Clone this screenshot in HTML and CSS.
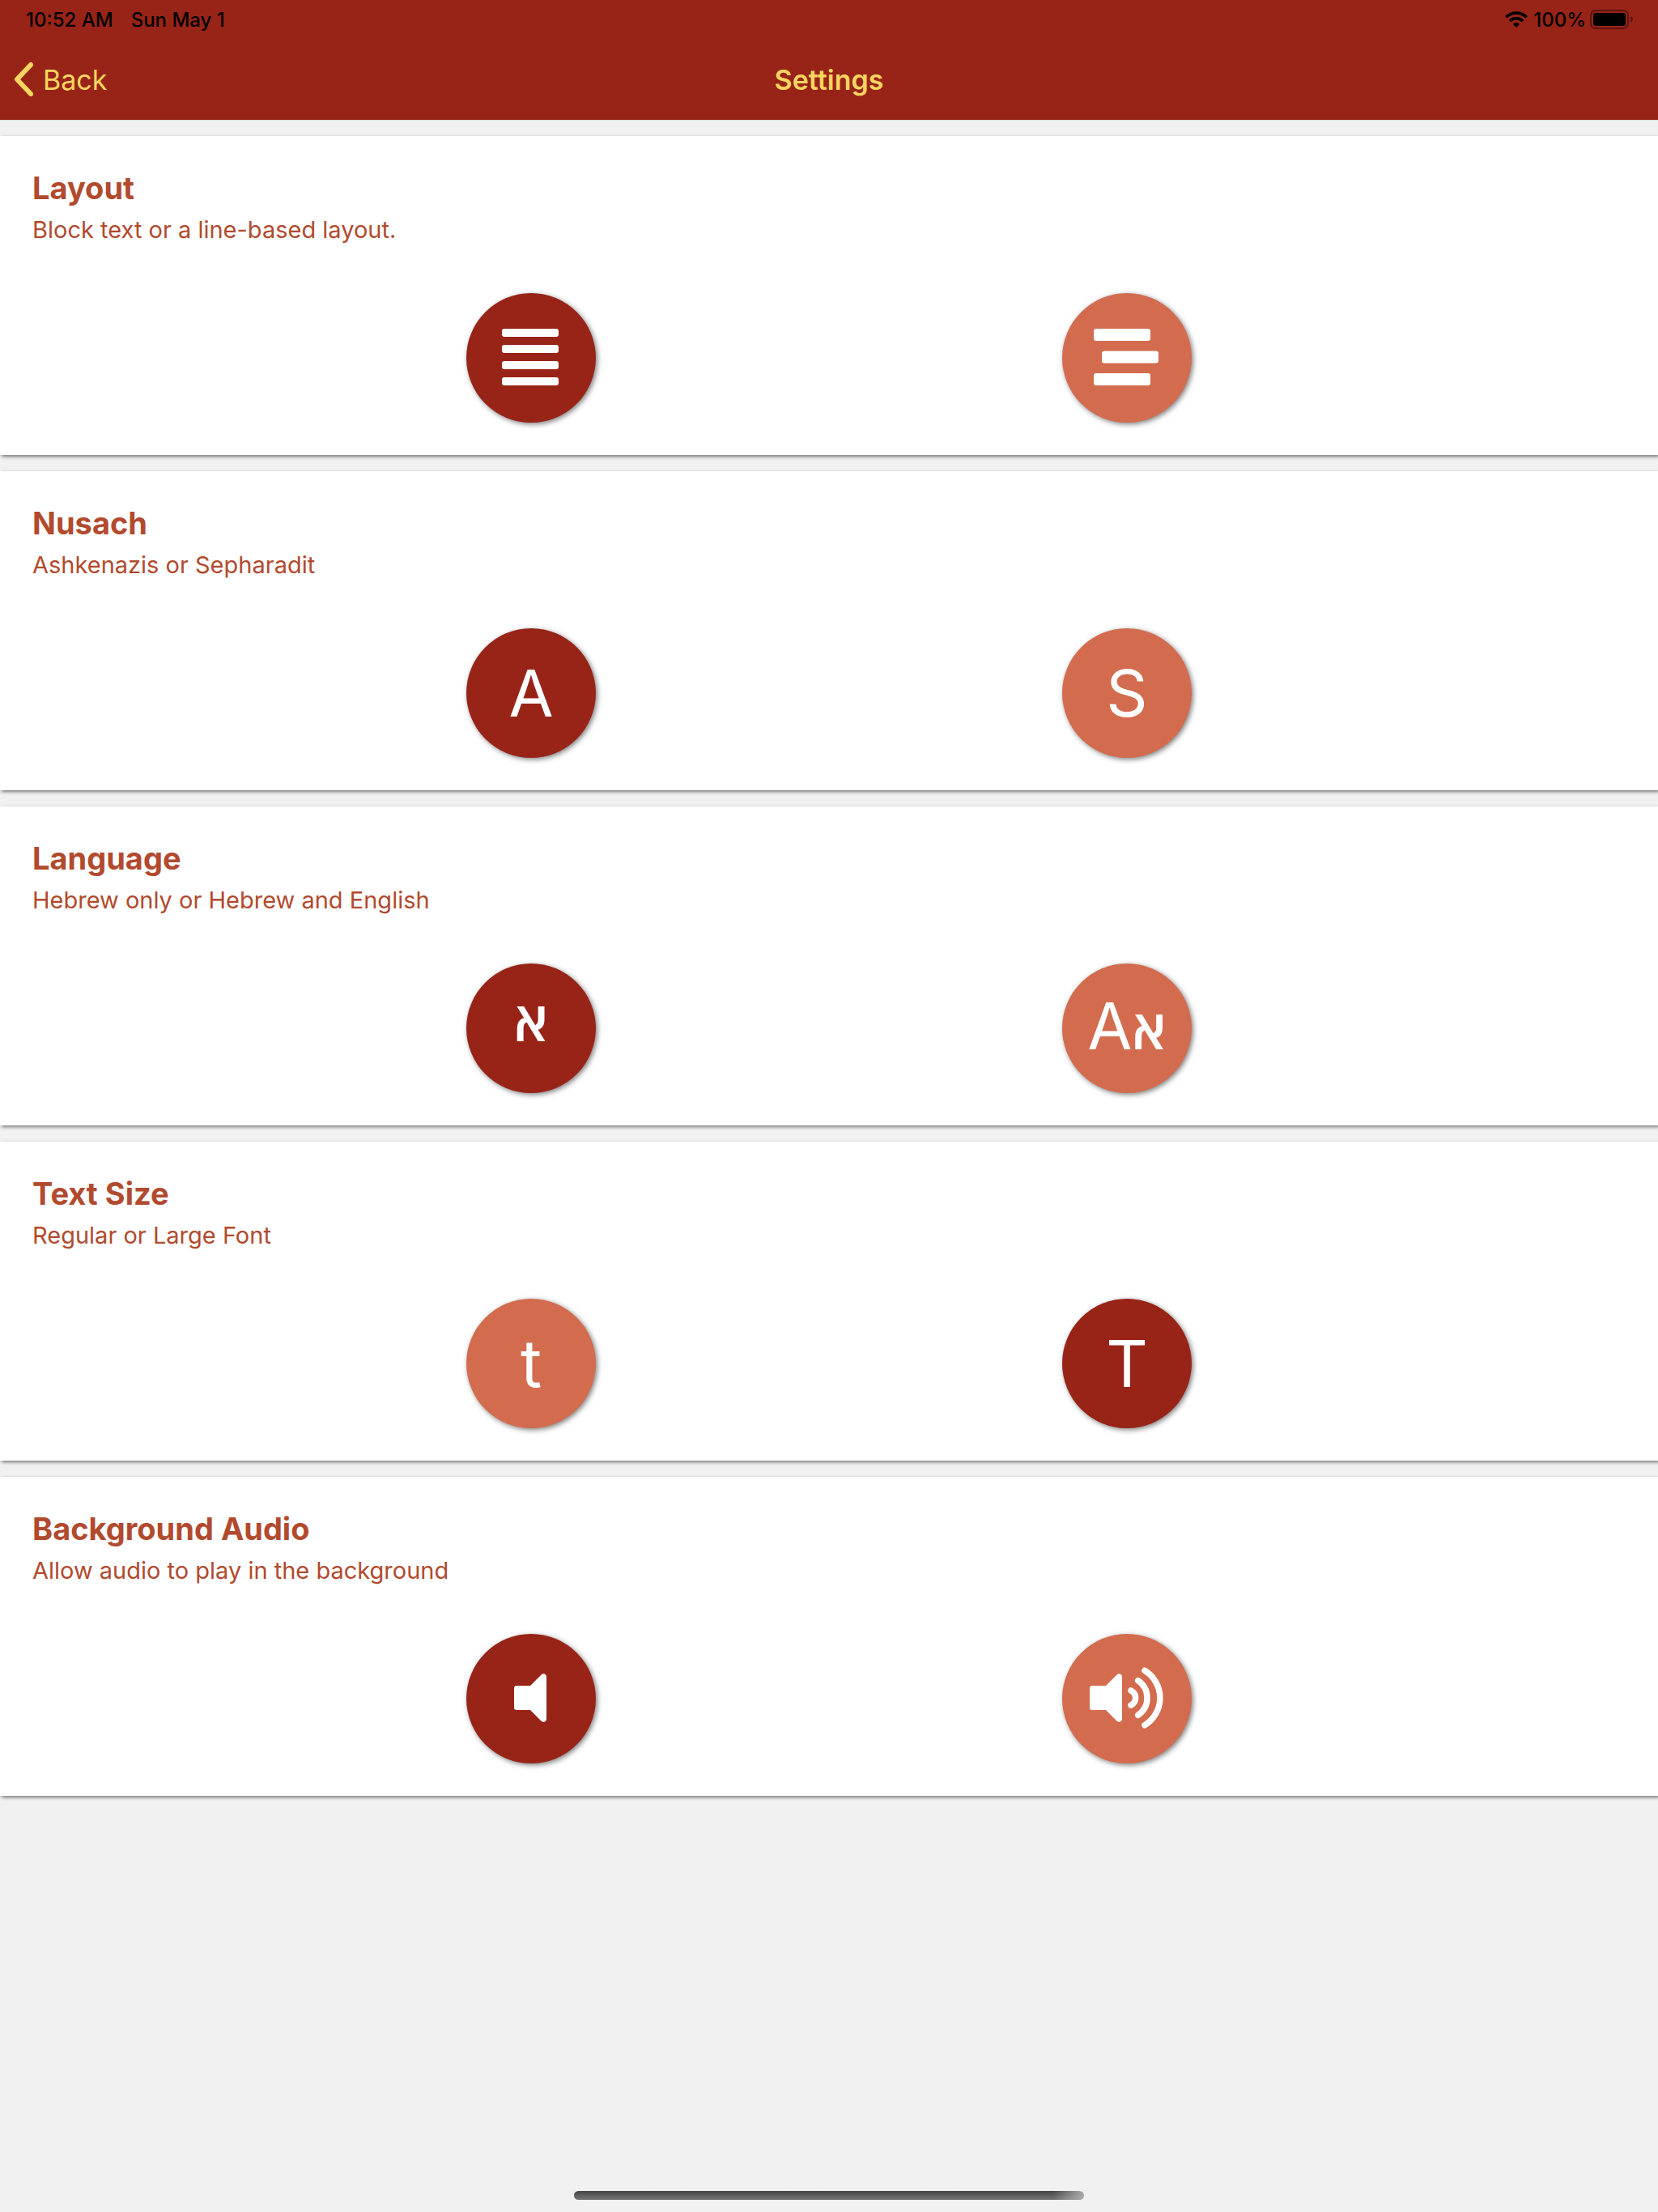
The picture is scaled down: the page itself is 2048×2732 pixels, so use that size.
FILE: index.html
```html
<!DOCTYPE html>
<html lang="en">
<head>
<meta charset="utf-8">
<meta name="viewport" content="width=device-width, initial-scale=1">
<title>Settings</title>
<link rel="stylesheet" href="styles.css">
</head>
<body>
<header class="header">
  <div class="status">
    <div class="status-group status-time"><span>10:52 AM</span><span>Sun May 1</span></div>
    <div class="status-group">
      <svg class="wifi" viewBox="0 0 28 20" aria-hidden="true">
        <g fill="none" stroke="#000" stroke-width="3.6">
          <path d="M1.3 7.2a18 18 0 0 1 25.4 0"/>
          <path d="M5.9 12a11.500 11.500 0 0 1 16.200 0"/>
        </g>
        <path d="M14 20l-4.200-4.200a6 6 0 0 1 8.400 0z"/>
      </svg>
      <span>100%</span>
      <svg class="battery" viewBox="0 0 54 24" aria-hidden="true">
        <rect x="1" y="1" width="46" height="22" rx="6" fill="none" stroke="#5c150f" stroke-width="2"/>
        <rect x="4" y="4" width="40" height="16" rx="3"/>
        <path d="M50 8q3 1.500 3 4t-3 4z" fill="#5c150f"/>
      </svg>
    </div>
  </div>
  <nav class="navbar">
    <button class="back" type="button">
      <svg class="chevron" viewBox="0 0 24 42" aria-hidden="true"><path d="M21 3L4 21l17 18" fill="none" stroke="currentColor" stroke-width="6" stroke-linecap="round" stroke-linejoin="round"/></svg>
      <span>Back</span>
    </button>
    <h1 class="title">Settings</h1>
  </nav>
</header>

<main class="settings">
  <section class="card" role="radiogroup" aria-labelledby="layout-title">
    <h2 class="card-title" id="layout-title">Layout</h2>
    <p class="card-text">Block text or a line-based layout.</p>
    <div class="options">
      <label class="option">
        <input class="choice" type="radio" name="layout" aria-label="Block text" checked>
        <svg class="glyph" viewBox="0 0 160 160" fill="#fff"><rect x="44" y="44" width="70" height="10" rx="3"/><rect x="44" y="64" width="70" height="10" rx="3"/><rect x="44" y="84" width="70" height="10" rx="3"/><rect x="44" y="104" width="70" height="10" rx="3"/></svg>
      </label>
      <label class="option">
        <input class="choice" type="radio" name="layout" aria-label="Line-based">
        <svg class="glyph" viewBox="0 0 160 160" fill="#fff"><rect x="39" y="44" width="70" height="15" rx="3"/><rect x="49" y="71.500" width="70" height="15" rx="3"/><rect x="39" y="99" width="70" height="15" rx="3"/></svg>
      </label>
    </div>
  </section>

  <section class="card" role="radiogroup" aria-labelledby="nusach-title">
    <h2 class="card-title" id="nusach-title">Nusach</h2>
    <p class="card-text">Ashkenazis or Sepharadit</p>
    <div class="options">
      <label class="option">
        <input class="choice" type="radio" name="nusach" checked>
        <span class="glyph">A</span>
      </label>
      <label class="option">
        <input class="choice" type="radio" name="nusach">
        <span class="glyph">S</span>
      </label>
    </div>
  </section>

  <section class="card" role="radiogroup" aria-labelledby="language-title">
    <h2 class="card-title" id="language-title">Language</h2>
    <p class="card-text">Hebrew only or Hebrew and English</p>
    <div class="options">
      <label class="option">
        <input class="choice" type="radio" name="language" checked>
        <span class="glyph glyph-raised"><span class="hebrew" lang="he">א</span></span>
      </label>
      <label class="option">
        <input class="choice" type="radio" name="language">
        <span class="glyph glyph-pair">A<span class="hebrew" lang="he">א</span></span>
      </label>
    </div>
  </section>

  <section class="card" role="radiogroup" aria-labelledby="size-title">
    <h2 class="card-title" id="size-title">Text Size</h2>
    <p class="card-text">Regular or Large Font</p>
    <div class="options">
      <label class="option">
        <input class="choice" type="radio" name="size">
        <span class="glyph">t</span>
      </label>
      <label class="option">
        <input class="choice" type="radio" name="size" checked>
        <span class="glyph">T</span>
      </label>
    </div>
  </section>

  <section class="card" role="radiogroup" aria-labelledby="audio-title">
    <h2 class="card-title" id="audio-title">Background Audio</h2>
    <p class="card-text">Allow audio to play in the background</p>
    <div class="options">
      <label class="option">
        <input class="choice" type="radio" name="audio" aria-label="Off" checked>
        <svg class="glyph" viewBox="0 0 160 160" fill="#fff"><path d="M62 64h17l13.500-13.500c2.500-2.500 6.500-1 6.500 2.500v52c0 3.500-4 5-6.500 2.500L79 94H62q-3 0-3-3V67q0-3 3-3z"/></svg>
      </label>
      <label class="option">
        <input class="choice" type="radio" name="audio" aria-label="On">
        <svg class="glyph" viewBox="0 0 160 160" fill="#fff"><path d="M37 64h17l13.500-13.500c2.500-2.500 6.500-1 6.500 2.500v52c0 3.500-4 5-6.500 2.500L54 94H37q-3 0-3-3V67q0-3 3-3z"/><g fill="none" stroke="#fff" stroke-width="7.500" stroke-linecap="round"><path d="M85 70a10 10 0 0 1 0 18"/><path d="M93.700 57.700a25.700 25.700 0 0 1 0 42.600"/><path d="M102 45.300a39.500 39.500 0 0 1 0 67.400"/></g></svg>
      </label>
    </div>
  </section>
</main>
<div class="home-bar"></div>
</body>
</html>
```
FILE: styles.css
```css
* {
  box-sizing: border-box;
}

body {
  margin: 0;
  min-height: 100vh;
  display: flex;
  flex-direction: column;
  background: #f1f1f1;
  color: #b14a2e;
  font-family: Inter, "Liberation Sans", sans-serif;
}

.header {
  background: #982418;
  color: #f7d560;
  border-bottom: 1px solid #d8d8d8;
}

.status {
  display: flex;
  justify-content: space-between;
  height: 48px;
  padding: 0 30px 0 32px;
  color: #000;
  font-size: 24px;
  font-weight: 500;
}

.status-group {
  display: flex;
  align-items: center;
  gap: 5px;
}

.status-time {
  gap: 22px;
}

.wifi {
  width: 28px;
  height: 20px;
  margin-right: 2px;
}

.battery {
  width: 54px;
  height: 24px;
}

.navbar {
  display: grid;
  grid-template-columns: 1fr auto 1fr;
  align-items: center;
  height: 100px;
  padding: 0 17px;
}

.back {
  display: flex;
  align-items: center;
  justify-self: start;
  gap: 12px;
  padding: 0;
  border: 0;
  background: none;
  color: inherit;
  font: inherit;
  font-size: 34px;
}

.chevron {
  width: 24px;
  height: 42px;
}

.title {
  margin: 0;
  font-size: 34px;
  font-weight: 600;
}

.settings {
  display: grid;
  gap: 20px;
  padding-top: 19px;
}

.card {
  padding: 38px 0 40px;
  background: #fff;
  box-shadow: 2px 2px 4px rgba(0, 0, 0, 0.5);
}

.card-title {
  margin: 0;
  padding: 0 40px;
  font-size: 38px;
  font-weight: 700;
  line-height: 52px;
}

.card-text {
  margin: 0;
  padding: 0 40px;
  font-size: 29px;
  line-height: 52px;
}

.options {
  display: flex;
  justify-content: space-evenly;
  margin-top: 52px;
}

.option {
  display: grid;
  width: 160px;
  height: 160px;
}

.choice,
.glyph {
  grid-area: 1 / 1;
  width: 160px;
  height: 160px;
  margin: 0;
}

.choice {
  appearance: none;
  border-radius: 50%;
  background: #d36c4f;
  box-shadow: 2px 2px 6px rgba(0, 0, 0, 0.5);
}

.choice:checked {
  background: #982418;
}

.glyph {
  z-index: 1;
  color: #fff;
  font-size: 80px;
  line-height: 160px;
  text-align: center;
}

.glyph-raised {
  line-height: 134px;
}

.glyph-pair {
  line-height: 154px;
}

.hebrew {
  font-family: "Open Sans", "Noto Sans", "DejaVu Sans", sans-serif;
  font-size: 68px;
  font-weight: 600;
  line-height: 0;
}

.home-bar {
  width: 630px;
  height: 11px;
  margin: auto auto 15px;
  border-radius: 6px;
  background: linear-gradient(90deg, transparent 94%, #aaa), linear-gradient(#444, #777);
}
```
